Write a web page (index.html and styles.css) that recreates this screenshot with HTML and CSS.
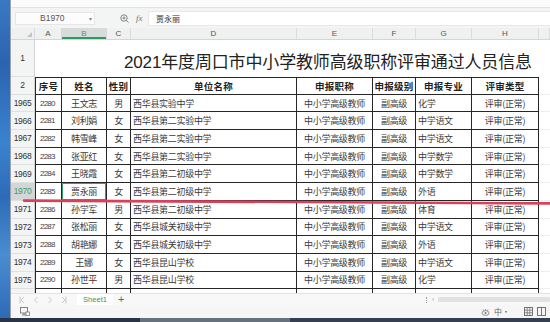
FILE: index.html
```html
<!DOCTYPE html>
<html lang="zh-CN">
<head>
<meta charset="utf-8">
<title>Sheet</title>
<link rel="stylesheet" href="styles.css">
</head>
<body>
<div class="screen">
  <div class="main">
    <div class="desktop"></div>
    <div class="app">
      <div class="toolbar-edge"></div>
      <div class="formula-bar">
        <div class="namebox"><span class="ref">B1970</span><span class="caret">▾</span></div>
        <div class="fx-tools">
          <svg class="zoom-ic" width="9" height="9" viewBox="0 0 9 9"><circle cx="4" cy="4" r="3.2" fill="none" stroke="#777" stroke-width="0.9"/><path d="M2.5 4h3M4 2.5v3M6.3 6.3L8.5 8.5" stroke="#777" stroke-width="0.9" fill="none"/></svg>
          <span class="fx">fx</span>
        </div>
        <div class="formula-input">贾永丽</div>
      </div>
      <div class="sheet">
        <div class="row colhead">
          <div class="ch corner"><svg width="5" height="5" viewBox="0 0 5 5"><path d="M5 0V5H0Z" fill="#c4c4c4"/></svg></div>
          <div class="ch">A</div><div class="ch sel">B</div><div class="ch">C</div><div class="ch">D</div>
          <div class="ch">E</div><div class="ch">F</div><div class="ch">G</div><div class="ch">H</div><div class="ch"></div>
        </div>
        <div class="row title-row">
          <div class="rh">1</div>
          <div class="title">2021年度周口市中小学教师高级职称评审通过人员信息</div>
        </div>
        <div class="row head-row">
          <div class="rh">2</div>
          <div class="c a hd">序号</div><div class="c hd">姓名</div><div class="c hd">性别</div><div class="c hd">单位名称</div>
          <div class="c hd">申报职称</div><div class="c hd">申报级别</div><div class="c hd">申报专业</div><div class="c hd">评审类型</div><div class="c blank"></div>
        </div>
        <div class="row"><div class="rh">1965</div><div class="c a num">2280</div><div class="c">王文志</div><div class="c">男</div><div class="c l">西华县实验中学</div><div class="c">中小学高级教师</div><div class="c">副高级</div><div class="c l">化学</div><div class="c">评审(正常)</div><div class="c blank"></div></div>
        <div class="row"><div class="rh">1966</div><div class="c a num">2281</div><div class="c">刘利娟</div><div class="c">女</div><div class="c l">西华县第二实验中学</div><div class="c">中小学高级教师</div><div class="c">副高级</div><div class="c l">中学语文</div><div class="c">评审(正常)</div><div class="c blank"></div></div>
        <div class="row"><div class="rh">1967</div><div class="c a num">2282</div><div class="c">韩雪峰</div><div class="c">女</div><div class="c l">西华县第二实验中学</div><div class="c">中小学高级教师</div><div class="c">副高级</div><div class="c l">中学语文</div><div class="c">评审(正常)</div><div class="c blank"></div></div>
        <div class="row"><div class="rh">1968</div><div class="c a num">2283</div><div class="c">张亚红</div><div class="c">女</div><div class="c l">西华县第二实验中学</div><div class="c">中小学高级教师</div><div class="c">副高级</div><div class="c l">中学数学</div><div class="c">评审(正常)</div><div class="c blank"></div></div>
        <div class="row"><div class="rh">1969</div><div class="c a num">2284</div><div class="c">王晓霞</div><div class="c">女</div><div class="c l">西华县第二初级中学</div><div class="c">中小学高级教师</div><div class="c">副高级</div><div class="c l">中学数学</div><div class="c">评审(正常)</div><div class="c blank"></div></div>
        <div class="row"><div class="rh cur">1970</div><div class="c a num">2285</div><div class="c active">贾永丽</div><div class="c">女</div><div class="c l">西华县第二初级中学</div><div class="c">中小学高级教师</div><div class="c">副高级</div><div class="c l">外语</div><div class="c">评审(正常)</div><div class="c blank"></div></div>
        <div class="row"><div class="rh">1971</div><div class="c a num">2286</div><div class="c">孙学军</div><div class="c">男</div><div class="c l">西华县第二初级中学</div><div class="c">中小学高级教师</div><div class="c">副高级</div><div class="c l">体育</div><div class="c">评审(正常)</div><div class="c blank"></div></div>
        <div class="row"><div class="rh">1972</div><div class="c a num">2287</div><div class="c">张松丽</div><div class="c">女</div><div class="c l">西华县城关初级中学</div><div class="c">中小学高级教师</div><div class="c">副高级</div><div class="c l">中学语文</div><div class="c">评审(正常)</div><div class="c blank"></div></div>
        <div class="row"><div class="rh">1973</div><div class="c a num">2288</div><div class="c">胡艳娜</div><div class="c">女</div><div class="c l">西华县城关初级中学</div><div class="c">中小学高级教师</div><div class="c">副高级</div><div class="c l">外语</div><div class="c">评审(正常)</div><div class="c blank"></div></div>
        <div class="row"><div class="rh">1974</div><div class="c a num">2289</div><div class="c">王娜</div><div class="c">女</div><div class="c l">西华县昆山学校</div><div class="c">中小学高级教师</div><div class="c">副高级</div><div class="c l">中学语文</div><div class="c">评审(正常)</div><div class="c blank"></div></div>
        <div class="row"><div class="rh">1975</div><div class="c a num">2290</div><div class="c">孙世平</div><div class="c">男</div><div class="c l">西华县昆山学校</div><div class="c">中小学高级教师</div><div class="c">副高级</div><div class="c l">化学</div><div class="c">评审(正常)</div><div class="c blank"></div></div>
        <div class="row"><div class="rh"></div><div class="c a"></div><div class="c"></div><div class="c"></div><div class="c"></div><div class="c"></div><div class="c"></div><div class="c"></div><div class="c"></div><div class="c blank"></div></div>
      </div>
      <div class="tabbar">
        <div class="nav">
          <svg width="6" height="8" viewBox="0 0 6 8"><path d="M1 0.5v7M5 1L2 4l3 3" fill="none" stroke="#c2c2c2" stroke-width="0.9"/></svg>
          <svg width="6" height="8" viewBox="0 0 6 8"><path d="M4.5 1L1.5 4l3 3" fill="none" stroke="#c2c2c2" stroke-width="0.9"/></svg>
          <svg width="6" height="8" viewBox="0 0 6 8"><path d="M1.5 1l3 3-3 3" fill="none" stroke="#c2c2c2" stroke-width="0.9"/></svg>
          <svg width="6" height="8" viewBox="0 0 6 8"><path d="M5 0.5v7M1 1l3 3-3 3" fill="none" stroke="#c2c2c2" stroke-width="0.9"/></svg>
        </div>
        <div class="tab">Sheet1</div>
        <div class="add">+</div>
        <div class="hscroll">
          <span class="grip"></span>
          <span class="arrow">‹</span>
          <span class="track"></span>
        </div>
      </div>
      <div class="statusbar">
        <svg class="st-left" width="10" height="9" viewBox="0 0 10 9"><rect x="0.5" y="0.5" width="7" height="5.5" fill="none" stroke="#777" stroke-width="0.9"/><path d="M2 8h4M4 6v2" stroke="#777" stroke-width="0.9"/><rect x="6" y="5" width="3.5" height="3.5" fill="#fff" stroke="#777" stroke-width="0.8"/></svg>
        <div class="st-right">
          <svg width="9" height="8" viewBox="0 0 9 8"><ellipse cx="4.5" cy="5" rx="3.5" ry="2.4" fill="none" stroke="#777" stroke-width="0.8"/><circle cx="4.5" cy="5" r="1" fill="#777"/><path d="M2 1.5l0.8 1.2M4.5 1v1.3M7 1.5l-0.8 1.2" stroke="#777" stroke-width="0.7"/></svg>
          <span class="st-txt">中·</span>
          <svg class="view" width="9" height="9" viewBox="0 0 9 9"><rect x="0.5" y="0.5" width="8" height="8" fill="none" stroke="#666" stroke-width="0.9"/><path d="M0.5 3.2h8M0.5 5.8h8M3.2 0.5v8M5.8 0.5v8" stroke="#666" stroke-width="0.7"/></svg>
          <svg width="9" height="9" viewBox="0 0 9 9"><rect x="0.5" y="0.5" width="8" height="8" fill="none" stroke="#666" stroke-width="0.9"/><path d="M4.5 0.5v8" stroke="#666" stroke-width="0.9"/></svg>
        </div>
      </div>
    </div>
  </div>
  <div class="taskbar"><span class="tb1"></span><span class="tb2"></span><span class="tb3"></span></div>
  <svg class="redline" width="550" height="322" viewBox="0 0 550 322"><path d="M24 200.6 Q 280 200.8 550 203.4" fill="none" stroke="#d9405a" stroke-width="2.6" stroke-linecap="round"/></svg>
</div>
</body>
</html>
```

FILE: styles.css
```css
html, body {
  margin: 0;
  padding: 0;
}
body {
  width: 550px;
  height: 322px;
  overflow: hidden;
  background: #fff;
  font-family: "Noto Sans CJK SC", "Liberation Sans", sans-serif;
  color: #333;
}
.screen {
  position: relative;
  width: 550px;
  height: 322px;
  display: flex;
  flex-direction: column;
}
.main {
  flex: 1;
  display: flex;
  min-height: 0;
}
.desktop {
  width: 10px;
  background: linear-gradient(180deg, #3b78c4 0%, #2b63b0 20%, #3a83cf 45%, #2e6ab8 62%, #4a8dd2 80%, #2f6ab5 100%);
}
.app {
  width: 539px;
  border-left: 1px solid #9aa4ae;
  display: flex;
  flex-direction: column;
  min-width: 0;
}
.toolbar-edge {
  height: 8px;
  box-sizing: border-box;
  background: #fbfbfb;
  border-bottom: 1px solid #e3e3e3;
}
.formula-bar {
  height: 20px;
  box-sizing: border-box;
  display: flex;
  align-items: center;
  background: #f3f4f4;
  padding-left: 4px;
}
.namebox {
  width: 80px;
  height: 13px;
  box-sizing: border-box;
  background: #fcfcfc;
  border: 1px solid #e6e6e6;
  display: flex;
  align-items: center;
  padding-left: 24px;
  padding-right: 2px;
  font: 8.5px "Liberation Sans", sans-serif;
  color: #555;
}
.caret {
  margin-left: auto;
  font-size: 6px;
  color: #888;
}
.fx-tools {
  width: 53px;
  display: flex;
  align-items: center;
  padding-left: 25px;
  box-sizing: border-box;
  gap: 7px;
}
.fx {
  font: italic 9px "Liberation Serif", serif;
  color: #777;
}
.formula-input {
  flex: 1;
  height: 15px;
  box-sizing: border-box;
  background: #fff;
  border: 1px solid #e8e8e8;
  border-right: none;
  padding-left: 7px;
  font-size: 8px;
  line-height: 13px;
  color: #333;
}
.sheet {
  height: 265px;
  overflow: hidden;
}
.row {
  display: grid;
  grid-template-columns: 24px 27px 45px 24px 166px 76px 43px 56px 67px 11px;
  height: 17.7px;
}
.colhead {
  height: 12px;
  background: #eff0f0;
  box-sizing: border-box;
  border-bottom: 1px solid #d4d6d6;
}
.ch {
  display: flex;
  align-items: center;
  justify-content: center;
  border-right: 1px solid #dadcdc;
  font: 8px "Liberation Sans", sans-serif;
  color: #555;
}
.ch.corner {
  align-items: flex-end;
  justify-content: flex-end;
  padding: 0 2px 2px 0;
  box-sizing: border-box;
}
.ch.sel {
  background: #d7dbda;
  color: #6a8c78;
  box-shadow: inset 0 -2px 0 #2f9a60;
}
.title-row {
  height: 37px;
}
.rh {
  display: flex;
  align-items: center;
  justify-content: center;
  background: #f3f4f4;
  box-sizing: border-box;
  border-right: 1px solid #d2d4d4;
  border-bottom: 1px solid #dfe1e1;
  font: 8.5px "Liberation Sans", sans-serif;
  letter-spacing: -0.3px;
  color: #333;
}
.rh.cur {
  background: #d3d6d6;
  color: #3d9a6b;
}
.title {
  grid-column: 2 / -1;
  display: flex;
  align-items: center;
  padding-left: 89px;
  padding-top: 3px;
  font-family: "Liberation Sans", "Noto Sans CJK SC", sans-serif;
  font-size: 17px;
  letter-spacing: -0.15px;
  color: #222;
  white-space: nowrap;
}
.c {
  display: flex;
  align-items: center;
  justify-content: center;
  box-sizing: border-box;
  border-right: 1px solid #262626;
  border-bottom: 1px solid #262626;
  font-size: 9px;
  letter-spacing: -0.3px;
  color: #3a3a3a;
  white-space: nowrap;
  overflow: hidden;
}
.c.a {
  border-left: 1px solid #262626;
}
.c.l {
  justify-content: flex-start;
  padding-left: 2px;
}
.c.num {
  font: 8px "Liberation Sans", sans-serif;
  letter-spacing: -0.8px;
  color: #444;
  justify-content: flex-start;
  padding-left: 4px;
}
.c.hd {
  font-weight: 700;
  font-size: 9.5px;
  letter-spacing: 0.3px;
  color: #222;
}
.head-row .c {
  border-top: 1px solid #262626;
}
.head-row .c.blank {
  border-top: none;
}
.c.blank {
  border-right: none;
  border-bottom: 1px solid #eeeeee;
}
.c.active {
  box-shadow: inset 0 0 0 1px #3a9f6a;
}
.tabbar {
  height: 12px;
  display: flex;
  align-items: center;
  background: #f8f8f8;
  border-top: 1px solid #e2e2e2;
  box-sizing: border-box;
  position: relative;
}
.nav {
  display: flex;
  gap: 8px;
  padding-left: 8px;
  width: 66px;
  box-sizing: border-box;
}
.tab {
  width: 36px;
  height: 11px;
  background: #fff;
  display: flex;
  align-items: center;
  justify-content: center;
  font: 7.5px "Liberation Sans", sans-serif;
  color: #2f9a60;
}
.add {
  margin-left: 5px;
  font: 11px "Liberation Sans", sans-serif;
  color: #666;
  line-height: 11px;
}
.hscroll {
  margin-left: auto;
  width: 124px;
  display: flex;
  align-items: center;
  gap: 4px;
}
.grip {
  width: 1px;
  height: 6px;
  border-left: 1px dotted #999;
}
.arrow {
  font: 7px "Liberation Sans", sans-serif;
  color: #aaa;
}
.track {
  flex: 1;
  height: 5px;
  background: #e2e2e2;
  border-radius: 1px;
}
.statusbar {
  height: 13px;
  display: flex;
  align-items: center;
  background: #f6f6f6;
  padding-left: 9px;
}
.st-right {
  margin-left: auto;
  display: flex;
  align-items: center;
  gap: 4px;
  padding-right: 4px;
}
.st-txt {
  font-size: 8px;
  color: #666;
  margin-right: 10px;
}
.taskbar {
  height: 4px;
  display: flex;
  background: #3b4656;
}
.tb1 { width: 140px; background: #2a3444; }
.tb2 { width: 150px; background: #66717e; }
.tb3 { flex: 1; background: #34404f; }
.redline {
  position: absolute;
  left: 0;
  top: 0;
  pointer-events: none;
}
```
